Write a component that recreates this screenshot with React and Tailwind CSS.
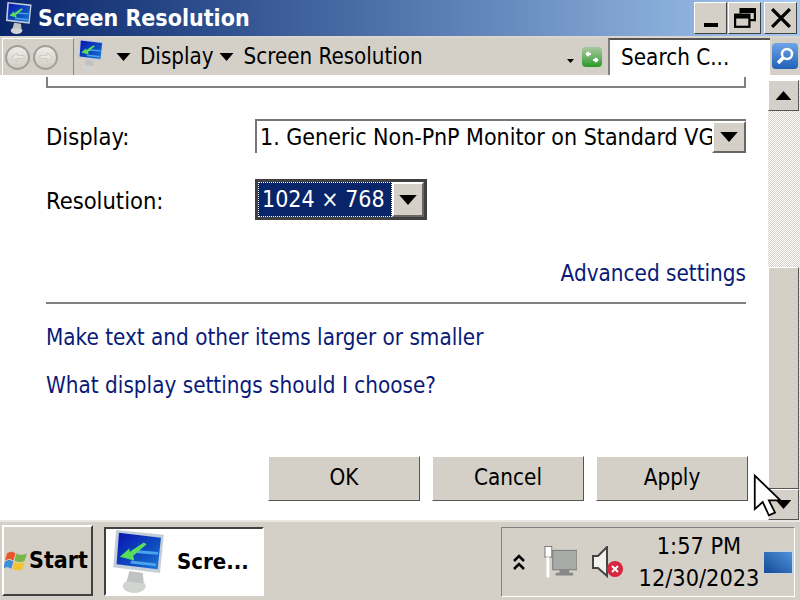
import { useId } from "react";

const FONT = "font-['DejaVu_Sans_Condensed','DejaVu_Sans',sans-serif]";

// Display control panel monitor, used in title bar, address bar and taskbar
const MonitorIcon = ({ className }) => {
  const id = useId();
  return (
    <svg viewBox="0 0 54 66" className={className}>
      <defs>
        <linearGradient id={id} x1="0" y1="0" x2="1" y2="1">
          <stop offset="0" stopColor="#0a14b0" />
          <stop offset="0.6" stopColor="#0f4cc0" />
          <stop offset="1" stopColor="#1a7ad8" />
        </linearGradient>
      </defs>
      <ellipse cx="22" cy="59" rx="12" ry="7" fill="#d2d4d2" />
      <path d="M17 43 31 45l1 11-18-2z" fill="#c0c3c3" />
      <path d="M3 0 53 5l-4 40L0 39z" fill="#c4ced8" />
      <path d="M6 3 50 8l-3.500 33L3.500 36z" fill={`url(#${id})`} />
      <path d="M24 21 47 23v3L23 24zM19 32 45 35v3L18 35z" fill="#4aa4ea" />
      <path d="M7 28 17 19v4L32 13l3 2-14 12 1 5z" fill="#58dc5c" />
    </svg>
  );
};

const Triangle = ({ className = "" }) => (
  <svg viewBox="0 0 14 8" className={className}>
    <path d="M0 0h14L7 8z" fill="#000" />
  </svg>
);

const NavCircle = ({ flip }) => (
  <div className="flex h-[25px] w-[25px] items-center justify-center rounded-full border-2 border-[#a09e96] bg-gradient-to-b from-[#efede8] to-[#cfccc4]">
    <svg viewBox="0 0 14 10" className={`h-[10px] w-[14px] ${flip ? "rotate-180" : ""}`}>
      <path d="M1 5 6 1v2.500h7v3H6V9z" fill="#e9e7e2" stroke="#c4c1b9" strokeWidth="0.7" />
    </svg>
  </div>
);

const WinButton = ({ children, className = "" }) => (
  <div className={`flex h-[32px] w-[33px] items-center justify-center border border-t-white border-r-[#404040] border-b-[#404040] border-l-white bg-[#d4d0c8] ${className}`}>
    {children}
  </div>
);

const ScrollButton = ({ children, className = "" }) => (
  <div className={`flex h-[31px] w-[31px] shrink-0 items-center justify-center border border-t-white border-r-[#555] border-b-[#555] border-l-white bg-[#d4d0c8] ${className}`}>
    {children}
  </div>
);

const DialogButton = ({ label }) => (
  <button className="flex h-[45px] w-[152px] items-center justify-center border border-t-white border-r-[#555] border-b-[#555] border-l-white bg-[#d4d0c8] pb-[2px] text-[22.3px] text-black">
    {label}
  </button>
);

const Link = ({ children, className = "" }) => (
  <div className={`text-[22.3px] leading-[30px] text-[#0a1a78] ${className}`}>{children}</div>
);

const ComboArrow = ({ className = "w-[32px]" }) => (
  <div className={`flex h-full shrink-0 items-center justify-center border-2 border-t-white border-r-[#666] border-b-[#666] border-l-white bg-[#d4d0c8] ${className}`}>
    <Triangle className="h-[10px] w-[18px]" />
  </div>
);

export default function App() {
  return (
    <div className={`flex h-[600px] w-[800px] flex-col overflow-hidden bg-white ${FONT}`}>
      {/* Title bar */}
      <div className="flex h-[36px] shrink-0 items-center bg-gradient-to-r from-[#0a246a] to-[#a6caf0] pr-[3px] pl-[5px]">
        <MonitorIcon className="h-[32px] w-[28px]" />
        <span className="ml-[5px] text-[23px] font-bold text-white">Screen Resolution</span>
        <div className="ml-auto flex items-center">
          <WinButton>
            <div className="mt-[14px] h-[4px] w-[14px] bg-black" />
          </WinButton>
          <WinButton className="ml-px">
            <svg viewBox="0 0 20 18" className="h-[20px] w-[22px]" fill="none" stroke="#000" strokeWidth="2">
              <path d="M6 5V1h13v10h-5" />
              <path d="M6 3h13" strokeWidth="3" />
              <rect x="1" y="6" width="13" height="11" />
              <path d="M1 8h13" strokeWidth="3" />
            </svg>
          </WinButton>
          <WinButton className="ml-[3px]">
            <svg viewBox="0 0 18 18" className="h-[20px] w-[20px]" stroke="#000" strokeWidth="3">
              <path d="M1 1l16 16M17 1 1 17" />
            </svg>
          </WinButton>
        </div>
      </div>

      {/* Address bar */}
      <div className="flex h-[41px] shrink-0 items-stretch border-t-2 border-b-2 border-t-[#d9d6cf] border-b-white bg-[#d4d0c8] pl-[2px]">
        <div className="flex w-[72px] items-center gap-[3px] border-t border-r border-l border-t-white border-r-[#8a8880] border-l-white pl-[2px]">
          <NavCircle />
          <NavCircle flip />
        </div>
        <MonitorIcon className="mt-[1px] ml-[3px] h-[32px] w-[28px]" />
        <Triangle className="mt-[15px] ml-[11px] h-[8px] w-[15px]" />
        <span className="ml-[9px] self-center text-[22.2px] text-black">Display</span>
        <Triangle className="mt-[15px] ml-[5px] h-[8px] w-[15px]" />
        <span className="ml-[10px] self-center text-[22.2px] text-black">Screen Resolution</span>
        <Triangle className="mt-[21px] ml-auto h-[4px] w-[7px]" />
        <div className="mt-[9px] mr-[6px] ml-[8px] flex h-[20px] w-[20px] items-center justify-center rounded-sm bg-gradient-to-b from-[#a8c8a0] to-[#1f9a20]">
          <svg viewBox="0 0 16 12" className="h-[12px] w-[16px]" fill="none" stroke="#fff" strokeWidth="2">
            <path d="M7 3H2M2 3l3-2M2 3l3 2M9 9h5M14 9l-3-2M14 9l-3 2" />
          </svg>
        </div>
        <div className="flex w-[162px] items-center border-t-2 border-l-2 border-t-[#555] border-l-[#808080] bg-white pl-[11px] text-[22.3px] text-black">
          Search C...
        </div>
        <div className="mx-[2px] mt-[5px] flex h-[26px] w-[26px] items-center justify-center rounded-sm bg-gradient-to-b from-[#6ea4e8] to-[#1f60b8]">
          <svg viewBox="0 0 20 20" className="h-[20px] w-[20px]" fill="none" stroke="#fff">
            <circle cx="12" cy="8" r="5" strokeWidth="2.500" />
            <path d="M8 12 3 17" strokeWidth="3.500" />
          </svg>
        </div>
      </div>

      {/* Main area */}
      <div className="flex min-h-0 flex-1">
        <div className="w-[768px] shrink-0 pr-[22px] pl-[46px]">
          {/* bottom edge of the group box scrolled out of view */}
          <div className="h-[11px] border-r-2 border-b-2 border-l-2 border-[#808080]" />

          <div className="mt-[31px] flex h-[34px] items-center">
            <span className="w-[209px] shrink-0 pt-[4px] text-[23.5px] text-black">Display:</span>
            <div className="flex h-full min-w-0 flex-1 items-stretch border-t-2 border-l-2 border-[#777] bg-white">
              <span className="min-w-0 flex-1 overflow-hidden pl-[3px] text-[23px] leading-[33px] whitespace-nowrap text-black">
                1. Generic Non-PnP Monitor on Standard VGA
              </span>
              <ComboArrow className="w-[34px]" />
            </div>
          </div>

          <div className="mt-[26px] flex h-[41px] items-center">
            <span className="w-[209px] shrink-0 pt-[5px] text-[23.5px] text-black">Resolution:</span>
            <div className="flex h-full w-[172px] items-stretch border-[3px] border-[#404040] bg-white">
              <span className="flex-1 border border-dotted border-white bg-[#0a246a] pl-[3px] text-[23px] leading-[32px] whitespace-nowrap text-white">
                1024 × 768
              </span>
              <ComboArrow />
            </div>
          </div>

          <Link className="mt-[38px] text-right">Advanced settings</Link>
          <div className="mt-[14px] h-[2px] bg-[#808080]" />
          <Link className="mt-[18px]">Make text and other items larger or smaller</Link>
          <Link className="mt-[18px]">What display settings should I choose?</Link>

          <div className="mt-[56px] -mr-[2px] flex justify-end gap-[12px]">
            <DialogButton label="OK" />
            <DialogButton label="Cancel" />
            <DialogButton label="Apply" />
          </div>
        </div>

        {/* Scrollbar */}
        <div className="mt-[3px] flex w-[32px] flex-col bg-[repeating-conic-gradient(#d4d0c8_0_25%,#fff_0_50%)] bg-[length:2px_2px]">
          <ScrollButton>
            <Triangle className="h-[9px] w-[17px] rotate-180" />
          </ScrollButton>
          <div className="h-[156px] shrink-0" />
          <div className="w-[31px] flex-1 border border-t-white border-r-[#555] border-b-[#555] border-l-white bg-[#d4d0c8]" />
          <ScrollButton>
            <Triangle className="h-[9px] w-[17px]" />
          </ScrollButton>
        </div>
      </div>

      {/* Taskbar */}
      <div className="flex h-[80px] shrink-0 items-start border-t-2 border-t-[#e9e7e2] bg-[#d4d0c8] pt-[3px]">
        <div className="ml-[2px] flex h-[71px] w-[91px] items-center border-2 border-t-white border-r-[#404040] border-b-[#404040] border-l-white">
          <svg viewBox="0 0 24 24" className="h-[25px] w-[25px] shrink-0">
            <path d="M3 5c3-2 5-2 8 0l-2 7c-3-2-5-2-8 0z" fill="#e8552a" />
            <path d="M12 5c3 2 6 2 10 0l-2 7c-3 2-6 2-10 0z" fill="#7ab648" />
            <path d="M1 13c3-2 5-2 8 0l-2 7c-3-2-5-2-8 0z" fill="#3f8fd8" />
            <path d="M10 13c3 2 6 2 10 0l-2 7c-3 2-6 2-10 0z" fill="#f4c430" />
          </svg>
          <span className="text-[23px] font-bold text-black">Start</span>
        </div>
        <div className="mt-[2px] ml-[11px] flex h-[69px] w-[160px] items-center border-2 border-t-[#404040] border-r-white border-b-white border-l-[#404040] bg-white pl-[5px]">
          <MonitorIcon className="h-[63px] w-[56px]" />
          <span className="ml-[10px] text-[22px] font-bold text-black">Scre...</span>
        </div>
        <div className="mt-[2px] mr-[5px] ml-auto flex h-[70px] w-[294px] items-center border border-t-[#808080] border-r-white border-b-white border-l-[#808080] pl-[11px]">
          <svg viewBox="0 0 12 18" className="h-[18px] w-[12px] shrink-0" fill="none" stroke="#000" strokeWidth="2.500">
            <path d="M1 8 6 3l5 5M1 16l5-5 5 5" />
          </svg>
          <svg viewBox="0 0 34 32" className="ml-[19px] h-[32px] w-[33px] shrink-0">
            <rect x="1" y="0" width="7" height="11" fill="#fff" stroke="#777" />
            <path d="M4 11v21" stroke="#fff" strokeWidth="3" />
            <rect x="9" y="4" width="25" height="20" fill="#a8aca8" stroke="#777" />
            <path d="M16 24h10v3h4v3H12v-3h4z" fill="#888" />
          </svg>
          <svg viewBox="0 0 32 32" className="ml-[15px] h-[32px] w-[32px] shrink-0">
            <path d="M1 10h5l9-9v29l-9-8H1z" fill="#f2f1ed" stroke="#444" strokeWidth="2" />
            <circle cx="23" cy="23" r="8" fill="#d7263d" />
            <path d="M20 20l6 6M26 20l-6 6" stroke="#fff" strokeWidth="2" />
          </svg>
          <div className="ml-[14px] flex w-[122px] shrink-0 flex-col items-center text-[23.3px] leading-[32px] text-black">
            <span>1:57 PM</span>
            <span>12/30/2023</span>
          </div>
          <div className="ml-[3px] h-[23px] w-[30px] shrink-0 border border-[#c6d6e4] bg-gradient-to-tr from-[#174a94] to-[#4f92de]" />
        </div>
      </div>

      {/* Mouse pointer */}
      <svg viewBox="0 0 34 48" className="pointer-events-none absolute top-[469px] left-[753px] h-[52px] w-[30px]">
        <path d="M2 2v38l9-8 7 15 7-3-7-14h13z" fill="#fff" stroke="#000" strokeWidth="2" />
      </svg>
    </div>
  );
}
